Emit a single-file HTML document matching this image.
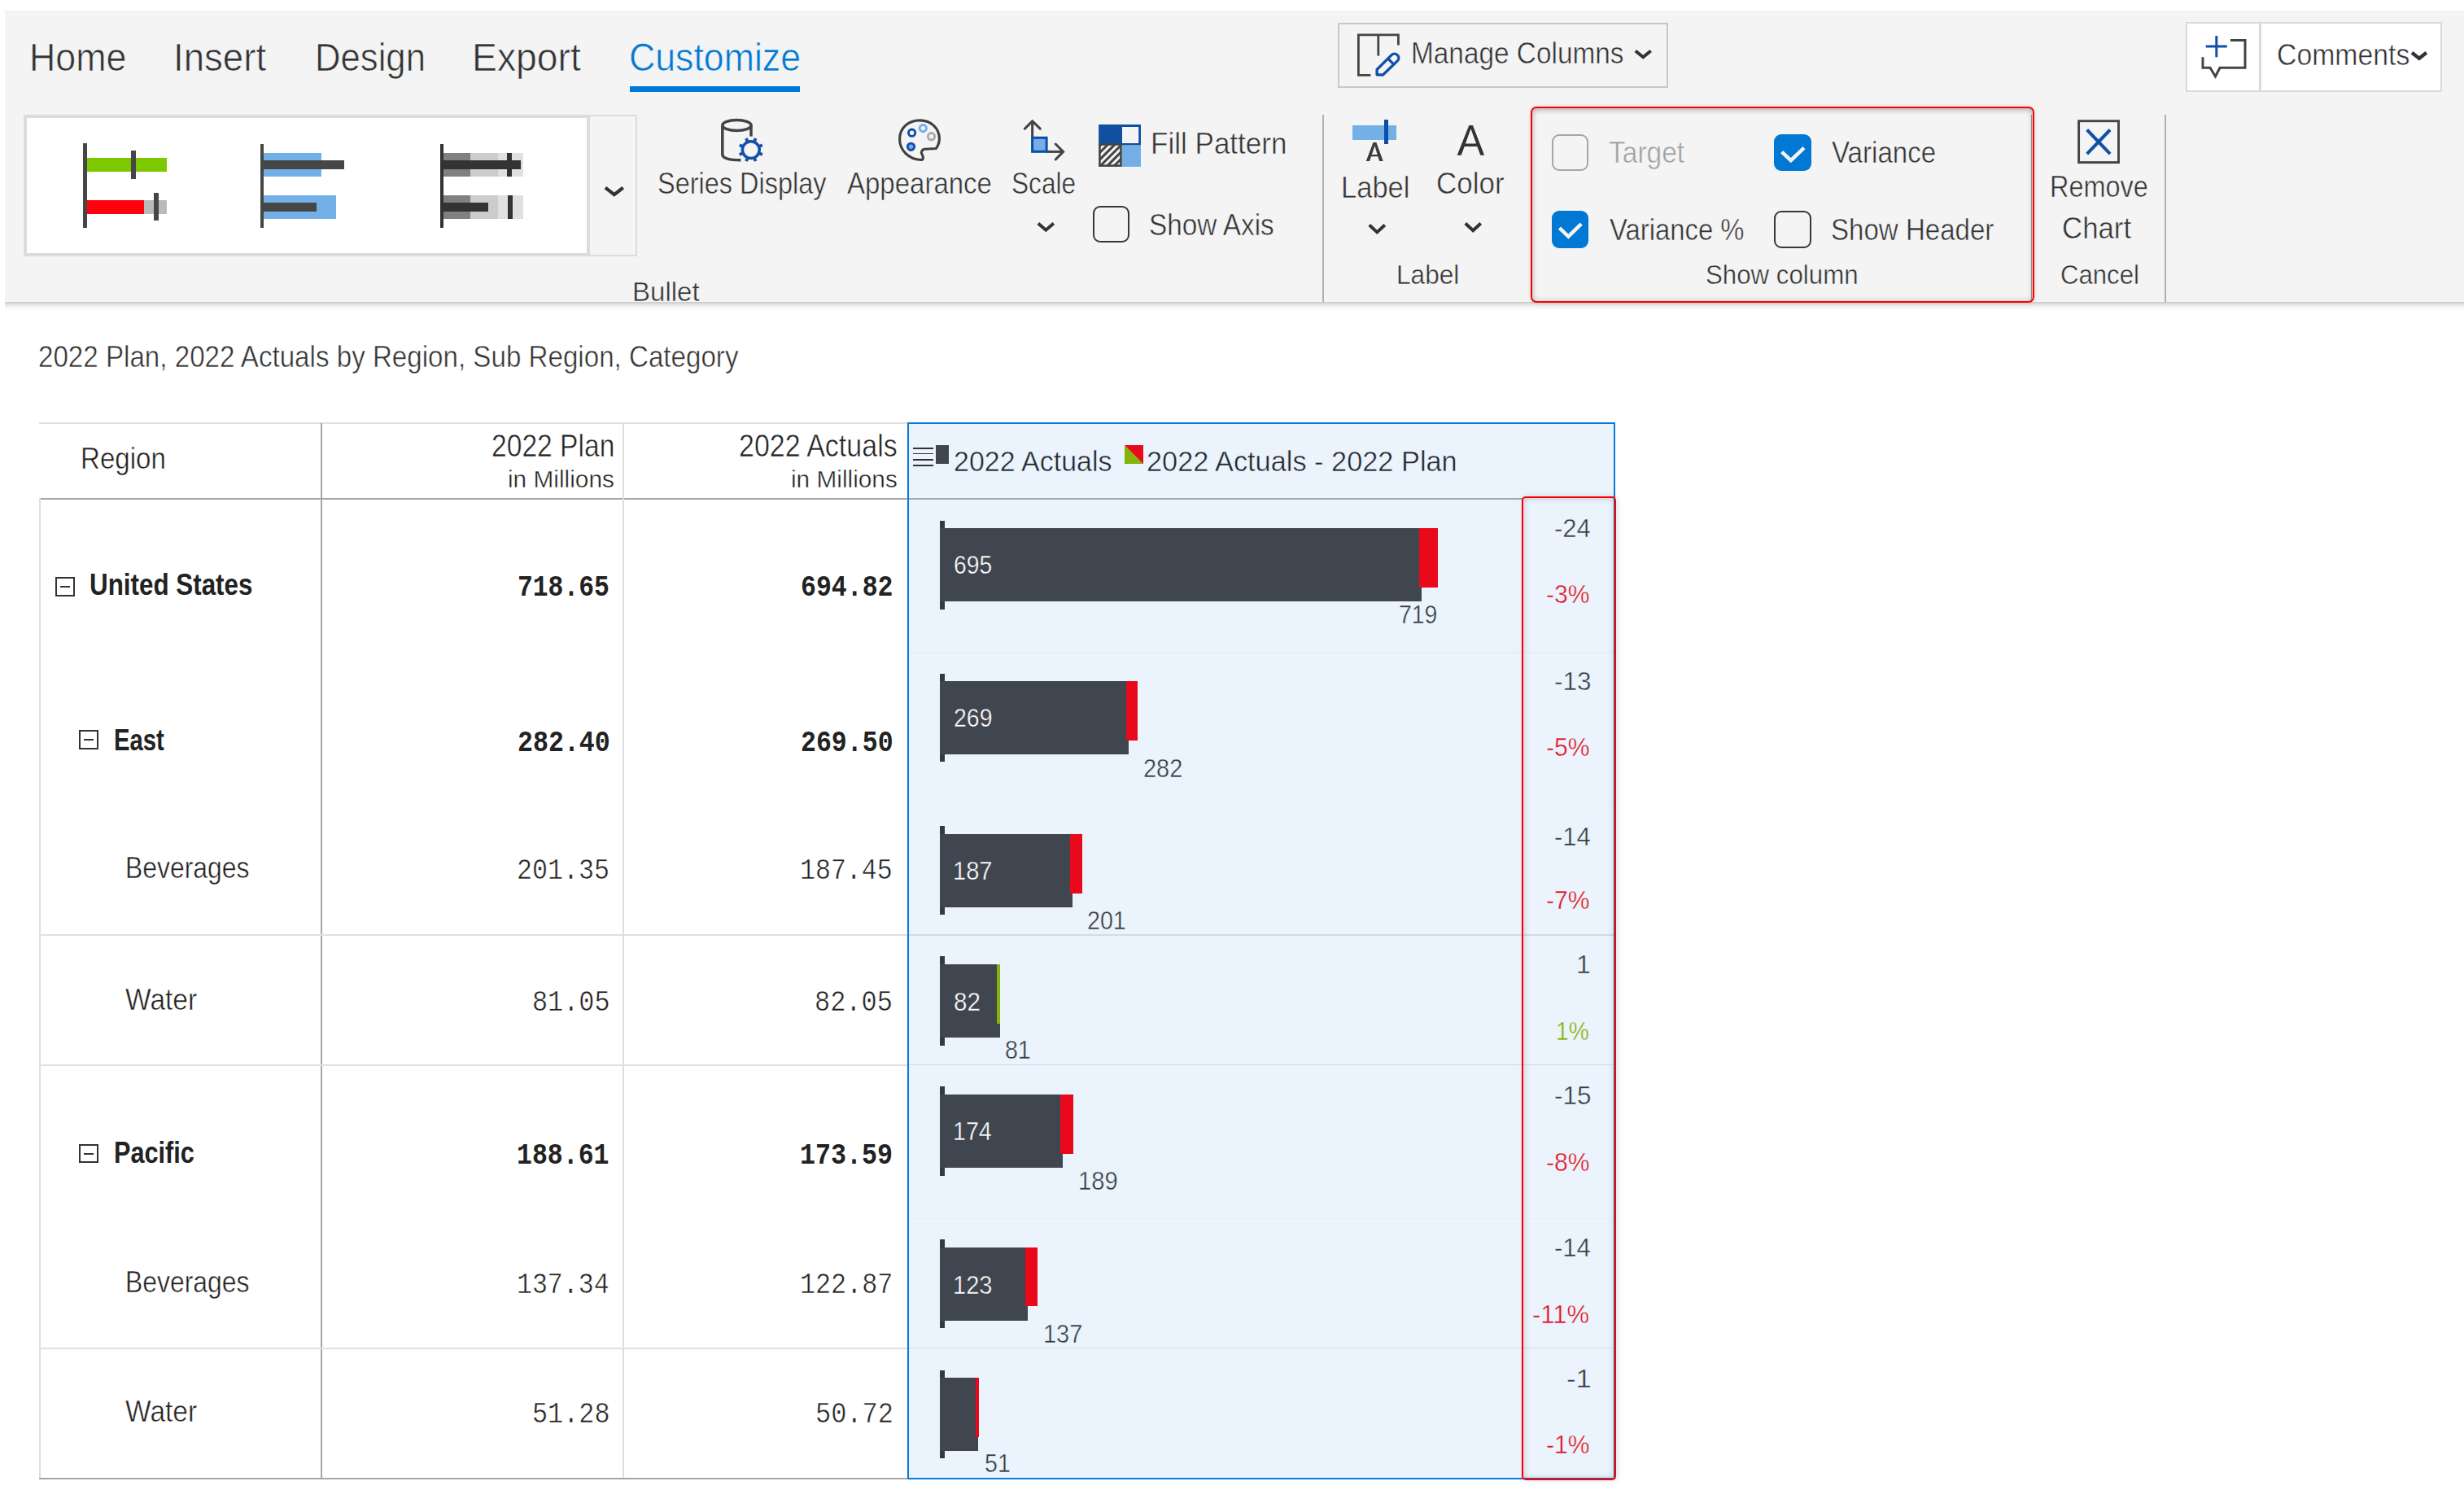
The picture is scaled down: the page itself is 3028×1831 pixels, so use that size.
<!DOCTYPE html>
<html><head><meta charset="utf-8"><title>Customize</title>
<style>
html,body{margin:0;padding:0;background:#fff;}
body{width:3028px;height:1831px;overflow:hidden;position:relative;font-family:"Liberation Sans",sans-serif;}
body>div,body>svg{position:absolute;}
.tx{white-space:nowrap;line-height:2em;transform-origin:0 0;}
</style></head><body>
<div style="left:6.00px;top:13.00px;width:3022.00px;height:357.80px;background:#f4f4f4;"></div>
<div style="left:6.00px;top:370.80px;width:3022.00px;height:11.20px;background:linear-gradient(to bottom, rgba(0,0,0,0.22) 0%, rgba(0,0,0,0.17) 12%, rgba(0,0,0,0.09) 35%, rgba(0,0,0,0.03) 65%, rgba(0,0,0,0) 100%);"></div>
<div style="left:774.00px;top:106.00px;width:209.00px;height:7.00px;background:#0078d4;"></div>
<div style="left:1644.30px;top:27.50px;width:405.30px;height:80.40px;box-sizing:border-box;border:2px solid #c8c8c8"></div>
<div style="left:2686.00px;top:27.30px;width:315.00px;height:85.30px;box-sizing:border-box;border:2px solid #dadada;background:#fff"></div>
<div style="left:2776.00px;top:28.00px;width:2.70px;height:84.00px;background:#dadada;"></div>
<div style="left:29.00px;top:141.00px;width:696.00px;height:173.50px;box-sizing:border-box;border:4.5px solid #dcdcdc;background:#fff"></div>
<div style="left:721.00px;top:141.00px;width:62.00px;height:173.50px;box-sizing:border-box;border:2px solid #dcdcdc;border-left:4px solid #dcdcdc"></div>
<div style="left:1625.00px;top:141.00px;width:2.00px;height:230.00px;background:#b0b0b0;"></div>
<div style="left:2660.00px;top:141.00px;width:2.00px;height:230.00px;background:#b0b0b0;"></div>
<div style="left:2495.50px;top:141.00px;width:1.50px;height:230.00px;background:#a0a0a0;"></div>
<div style="left:102.00px;top:176.40px;width:4.60px;height:103.60px;background:#464646;"></div>
<div style="left:106.60px;top:194.00px;width:98.40px;height:17.20px;background:#7ec800;"></div>
<div style="left:161.00px;top:185.40px;width:5.50px;height:34.20px;background:#464646;"></div>
<div style="left:106.60px;top:246.00px;width:70.70px;height:17.00px;background:#ff000c;"></div>
<div style="left:177.30px;top:246.00px;width:27.70px;height:17.00px;background:#bcbab6;"></div>
<div style="left:189.30px;top:237.00px;width:5.80px;height:34.30px;background:#464646;"></div>
<div style="left:320.10px;top:176.70px;width:4.20px;height:103.10px;background:#464646;"></div>
<div style="left:324.30px;top:188.00px;width:70.60px;height:28.80px;background:#74b0e8;"></div>
<div style="left:324.30px;top:197.10px;width:98.40px;height:10.80px;background:#464646;"></div>
<div style="left:324.30px;top:239.80px;width:89.20px;height:29.00px;background:#74b0e8;"></div>
<div style="left:324.30px;top:248.60px;width:64.30px;height:11.30px;background:#464646;"></div>
<div style="left:540.50px;top:176.80px;width:4.50px;height:103.10px;background:#333333;"></div>
<div style="left:545.00px;top:187.80px;width:33.00px;height:29.00px;background:#808080;"></div>
<div style="left:578.00px;top:187.80px;width:34.00px;height:29.00px;background:#cccccc;"></div>
<div style="left:612.00px;top:187.80px;width:31.00px;height:29.00px;background:#e0e0e0;"></div>
<div style="left:545.00px;top:240.00px;width:33.00px;height:28.75px;background:#808080;"></div>
<div style="left:578.00px;top:240.00px;width:34.00px;height:28.75px;background:#cccccc;"></div>
<div style="left:612.00px;top:240.00px;width:31.00px;height:28.75px;background:#e0e0e0;"></div>
<div style="left:545.00px;top:197.00px;width:95.00px;height:11.00px;background:#333333;"></div>
<div style="left:623.00px;top:187.80px;width:6.00px;height:29.00px;background:#333333;"></div>
<div style="left:545.00px;top:248.60px;width:55.30px;height:11.20px;background:#333333;"></div>
<div style="left:623.75px;top:240.00px;width:5.95px;height:28.75px;background:#333333;"></div>
<svg style="left:739.60px;top:225.50px" width="29.7" height="18.5" viewBox="0 0 29.7 18.5"><polyline points="3.94,4.67 14.85,13.15 25.77,4.67" fill="none" stroke="#333" stroke-width="4.3" stroke-linejoin="miter" stroke-linecap="butt"/></svg>
<svg style="left:1272.40px;top:270.00px" width="26.6" height="17.8" viewBox="0 0 26.6 17.8"><polyline points="3.80,4.48 13.30,12.68 22.80,4.48" fill="none" stroke="#333" stroke-width="4.0" stroke-linejoin="miter" stroke-linecap="butt"/></svg>
<svg style="left:1678.90px;top:272.20px" width="26.6" height="18.5" viewBox="0 0 26.6 18.5"><polyline points="3.80,4.48 13.30,13.38 22.80,4.48" fill="none" stroke="#333" stroke-width="4.0" stroke-linejoin="miter" stroke-linecap="butt"/></svg>
<svg style="left:1796.50px;top:270.00px" width="26.5" height="18.3" viewBox="0 0 26.5 18.3"><polyline points="3.80,4.48 13.25,13.18 22.70,4.48" fill="none" stroke="#333" stroke-width="4.0" stroke-linejoin="miter" stroke-linecap="butt"/></svg>
<svg style="left:2006.00px;top:57.60px" width="26.5" height="17.4" viewBox="0 0 26.5 17.4"><polyline points="3.80,4.48 13.25,12.28 22.70,4.48" fill="none" stroke="#333" stroke-width="4.0" stroke-linejoin="miter" stroke-linecap="butt"/></svg>
<svg style="left:2960.00px;top:60.20px" width="25.8" height="17.1" viewBox="0 0 25.8 17.1"><polyline points="3.98,4.73 12.90,11.67 21.82,4.73" fill="none" stroke="#333" stroke-width="4.4" stroke-linejoin="miter" stroke-linecap="butt"/></svg>
<svg style="left:870.00px;top:135.00px" width="80" height="70" viewBox="0 0 80 70">
<path d="M17.8,19 V55 C17.8,59.5 27,62 40.4,61.8" fill="none" stroke="#444" stroke-width="3.5"/>
<ellipse cx="35.4" cy="19" rx="17.6" ry="6.4" fill="none" stroke="#444" stroke-width="3.5"/>
<path d="M53,19 V32.6" fill="none" stroke="#444" stroke-width="3.5"/>
<g transform="translate(52.8,49.1)" fill="none" stroke="#1450a8">
<circle r="10.45" stroke-width="3.5"/>
<g stroke-width="3.8"><line x1="4.40" y1="-10.62" x2="5.82" y2="-14.04"/><line x1="10.62" y1="-4.40" x2="14.04" y2="-5.82"/><line x1="10.62" y1="4.40" x2="14.04" y2="5.82"/><line x1="4.40" y1="10.62" x2="5.82" y2="14.04"/><line x1="-4.40" y1="10.62" x2="-5.82" y2="14.04"/><line x1="-10.62" y1="4.40" x2="-14.04" y2="5.82"/><line x1="-10.62" y1="-4.40" x2="-14.04" y2="-5.82"/><line x1="-4.40" y1="-10.62" x2="-5.82" y2="-14.04"/></g></g>
</svg>
<svg style="left:1100.00px;top:142.00px" width="60" height="60" viewBox="0 0 60 60">
<path d="M31.9,54.5 C16,54 5.6,42 5.6,29 C5.6,15 16.5,5.9 30.5,5.9 C44,5.9 54.4,15.5 54.4,28.5 C54.4,33 52.5,37.5 50.3,40.5 L36.5,41.3 C33,41.5 31.5,45 33,47.5 C35,51 35,54.5 31.9,54.5 Z" fill="none" stroke="#404040" stroke-width="3.1" stroke-linejoin="round"/>
<circle cx="20.6" cy="21.2" r="4.15" fill="none" stroke="#0f4ea8" stroke-width="2.9"/>
<circle cx="34.3" cy="15.6" r="4.15" fill="none" stroke="#74b0ee" stroke-width="2.9"/>
<circle cx="44.5" cy="25.7" r="4.15" fill="none" stroke="#aaaaaa" stroke-width="2.9"/>
<circle cx="19.5" cy="38.3" r="4.15" fill="#74b0e8" stroke="#0f4ea8" stroke-width="2.9"/>
</svg>
<svg style="left:1230.00px;top:140.00px" width="84" height="64" viewBox="0 0 84 64">
<path d="M38.65,29 V9.5" fill="none" stroke="#444" stroke-width="3.05"/>
<polyline points="29.4,18.2 38.65,8.9 48.2,18.2" fill="none" stroke="#444" stroke-width="3.05" stroke-linecap="round"/>
<path d="M56,46.4 H76" fill="none" stroke="#444" stroke-width="3.05"/>
<polyline points="67.2,37 76.6,46.4 67.2,56" fill="none" stroke="#444" stroke-width="3.05" stroke-linecap="round"/>
<rect x="38.6" y="29.3" width="17.5" height="17" fill="#74b0e8" stroke="#0f4ea8" stroke-width="3.05"/>
</svg>
<svg style="left:1349.00px;top:152.00px" width="55" height="55" viewBox="0 0 55 55">
<defs><pattern id="hatch" width="6" height="6" patternUnits="userSpaceOnUse" patternTransform="translate(2,0) rotate(45)"><rect width="6" height="6" fill="#f4f4f4"/><rect width="3" height="6" fill="#444"/></pattern></defs>
<rect x="1.1" y="1" width="51.9" height="25.6" fill="#1050a0"/>
<rect x="30" y="4" width="20.2" height="20" fill="#f4f4f4"/>
<rect x="29.75" y="26.6" width="23.25" height="26.3" fill="#74aee6"/>
<rect x="2.4" y="25.5" width="26.05" height="26.1" fill="url(#hatch)" stroke="#444" stroke-width="2.6"/>
</svg>
<div style="left:1343.00px;top:252.60px;width:45.30px;height:45.40px;box-sizing:border-box;border:2.6px solid #383838;border-radius:9px"></div>
<div style="left:1906.60px;top:164.50px;width:45.40px;height:45.40px;box-sizing:border-box;border:2.6px solid #a6a6a6;border-radius:9px"></div>
<div style="left:2180.00px;top:164.50px;width:46.40px;height:45.50px;box-sizing:border-box;background:#0078d4;border-radius:9px"></div>
<svg style="left:2180.00px;top:164.50px" width="46.40000000000009" height="45.5" viewBox="0 0 46.40000000000009 45.5"><polyline points="9.6,21.6 20.8,32.2 37.0,16.6" fill="none" stroke="#f4f4f4" stroke-width="4.5"/></svg>
<div style="left:1906.60px;top:259.30px;width:45.40px;height:45.70px;box-sizing:border-box;background:#0078d4;border-radius:9px"></div>
<svg style="left:1906.60px;top:259.30px" width="45.40000000000009" height="45.69999999999999" viewBox="0 0 45.40000000000009 45.69999999999999"><polyline points="9.4,21.1 20.4,31.6 36.2,16.2" fill="none" stroke="#f4f4f4" stroke-width="4.5"/></svg>
<div style="left:2180.00px;top:259.30px;width:46.40px;height:45.70px;box-sizing:border-box;border:2.6px solid #383838;border-radius:9px"></div>
<div style="left:1662.20px;top:153.80px;width:54.00px;height:17.80px;background:#74b0e8;"></div>
<div style="left:1701.00px;top:147.40px;width:4.90px;height:30.10px;background:#0f4ea8;"></div>
<svg style="left:1676.00px;top:172.00px" width="28" height="30" viewBox="0 0 28 30"><path d="M2.8,26 L11.5,3.1 L15.4,3.1 L23.7,26 L19.2,26 L17.3,20.3 L9.0,20.3 L7.1,26 Z M9.8,18.1 L16.6,18.1 L13.5,7.2 Z" fill="#3c3c3c" fill-rule="evenodd"/></svg>
<svg style="left:1788.00px;top:151.00px" width="40" height="42" viewBox="0 0 40 42"><path d="M2.7,39.8 L17.3,2.9 L21.9,2.9 L36.1,39.8 L31.3,39.8 L27.3,28.9 L11.7,28.9 L7.7,39.8 Z M12.9,25.4 L26.1,25.4 L19.5,7.3 Z" fill="#333" fill-rule="evenodd"/></svg>
<svg style="left:1664.00px;top:38.00px" width="60" height="60" viewBox="0 0 60 60">
<path d="M20.4,54.35 H5.4 V4.9 H54.4 V17.5" fill="none" stroke="#444" stroke-width="2.8"/>
<path d="M29.8,4.9 V30.6" fill="none" stroke="#444" stroke-width="2.8"/>
<path d="M28.1,53.8 L28.1,47.5 L46,29.6 A5.16,5.16 0 0 1 53.3,36.9 L35.5,54.0 Z" fill="none" stroke="#1050a8" stroke-width="3.3" stroke-linejoin="round"/>
<path d="M41.65,33.95 L48.8,41.1" stroke="#1050a8" stroke-width="3.3"/>
</svg>
<svg style="left:2700.00px;top:38.00px" width="66" height="64" viewBox="0 0 66 64">
<path d="M41,11.5 H59 V45.3 H28 L22.5,56 L16,45.3 H7 V32.2" fill="none" stroke="#444" stroke-width="3"/>
<path d="M23.8,6 V32.2 M10.7,19 H36.8" stroke="#0f4ea8" stroke-width="3"/>
</svg>
<svg style="left:2550.00px;top:144.00px" width="60" height="60" viewBox="0 0 60 60"><rect x="4.6" y="4.7" width="48.9" height="50.9" fill="none" stroke="#444" stroke-width="2.9"/><path d="M14.7,15.5 L43.1,45.1 M43.1,15.5 L14.7,45.1" stroke="#1050a8" stroke-width="4"/></svg>
<div style="left:1880.80px;top:130.70px;width:619.00px;height:241.50px;box-sizing:border-box;border:2.6px solid #ff0000;border-radius:7px;box-shadow:inset 0 3px 7px -1px rgba(0,0,0,0.2), inset 0 0 8px rgba(0,0,0,0.14), 0 0 5px rgba(0,0,0,0.12)"></div>
<div style="left:48.00px;top:519.20px;width:1068.00px;height:2.00px;background:#e0e0e0;"></div>
<div style="left:48.00px;top:611.50px;width:1068.00px;height:2.00px;background:#a6a6a6;"></div>
<div style="left:394.00px;top:520.00px;width:2.00px;height:1298.00px;background:#a6a6a6;"></div>
<div style="left:765.00px;top:520.00px;width:2.00px;height:1298.00px;background:#dedede;"></div>
<div style="left:47.80px;top:612.00px;width:1.80px;height:1206.00px;background:#e0e0e0;"></div>
<div style="left:48.00px;top:1148.30px;width:1068.00px;height:1.80px;background:#e0e0e0;"></div>
<div style="left:48.00px;top:1307.80px;width:1068.00px;height:1.80px;background:#e0e0e0;"></div>
<div style="left:48.00px;top:1656.00px;width:1068.00px;height:1.80px;background:#e0e0e0;"></div>
<div style="left:48.00px;top:1816.00px;width:1068.00px;height:2.00px;background:#a6a6a6;"></div>
<div style="left:68.20px;top:709.30px;width:23.50px;height:23.30px;box-sizing:border-box;border:2.2px solid #333"></div>
<div style="left:73.90px;top:719.85px;width:12.10px;height:2.20px;background:#333;"></div>
<div style="left:97.10px;top:897.40px;width:23.50px;height:23.20px;box-sizing:border-box;border:2.2px solid #333"></div>
<div style="left:102.80px;top:907.90px;width:12.10px;height:2.20px;background:#333;"></div>
<div style="left:97.10px;top:1405.90px;width:23.50px;height:23.40px;box-sizing:border-box;border:2.2px solid #333"></div>
<div style="left:102.80px;top:1416.50px;width:12.10px;height:2.20px;background:#333;"></div>
<div style="left:1116.00px;top:520.00px;width:868.00px;height:1297.00px;background:#ebf3fc;"></div>
<div style="left:1116.00px;top:611.50px;width:755.00px;height:2.00px;background:#a3a9b0;"></div>
<div style="left:1116.00px;top:801.20px;width:868.00px;height:1.60px;background:#e6eef8;"></div>
<div style="left:1116.00px;top:989.60px;width:868.00px;height:1.60px;background:#e6eef8;"></div>
<div style="left:1116.00px;top:1148.20px;width:868.00px;height:1.60px;background:#d3dbe3;"></div>
<div style="left:1116.00px;top:1307.80px;width:868.00px;height:1.60px;background:#d3dbe3;"></div>
<div style="left:1116.00px;top:1496.60px;width:868.00px;height:1.60px;background:#e6eef8;"></div>
<div style="left:1116.00px;top:1655.60px;width:868.00px;height:1.60px;background:#d3dbe3;"></div>
<div style="left:1114.80px;top:518.80px;width:870.50px;height:1299.40px;box-sizing:border-box;border:2.4px solid #0a78d4"></div>
<div style="left:1121.60px;top:549.90px;width:25.40px;height:1.80px;background:#333;"></div>
<div style="left:1121.60px;top:556.70px;width:25.40px;height:1.80px;background:#333;"></div>
<div style="left:1121.60px;top:564.10px;width:25.40px;height:1.80px;background:#333;"></div>
<div style="left:1121.60px;top:571.30px;width:25.40px;height:1.80px;background:#333;"></div>
<div style="left:1150.00px;top:547.00px;width:16.20px;height:22.80px;background:#40464f;"></div>
<svg style="left:1382.00px;top:546.80px" width="23.2" height="23.5" viewBox="0 0 23.2 23.5"><path d="M0,0 L23.2,23.5 L0,23.5 Z" fill="#84b30c"/><path d="M0,0 L23.2,0 L23.2,23.5 Z" fill="#e8091b"/></svg>
<div style="left:1155.00px;top:639.50px;width:6.00px;height:109.20px;background:#343a42;"></div>
<div style="left:1155.00px;top:649.00px;width:592.00px;height:90.00px;background:#40464f;"></div>
<div style="left:1744.00px;top:649.00px;width:23.00px;height:73.00px;background:#e8091b;"></div>
<div style="left:1155.00px;top:827.50px;width:6.00px;height:108.70px;background:#343a42;"></div>
<div style="left:1155.00px;top:837.00px;width:232.40px;height:90.00px;background:#40464f;"></div>
<div style="left:1384.20px;top:836.60px;width:14.20px;height:73.10px;background:#e8091b;"></div>
<div style="left:1155.00px;top:1015.40px;width:6.00px;height:108.80px;background:#343a42;"></div>
<div style="left:1155.00px;top:1025.00px;width:163.00px;height:90.00px;background:#40464f;"></div>
<div style="left:1314.80px;top:1024.70px;width:14.90px;height:73.00px;background:#e8091b;"></div>
<div style="left:1155.00px;top:1175.20px;width:6.00px;height:109.50px;background:#343a42;"></div>
<div style="left:1155.00px;top:1184.70px;width:73.90px;height:90.20px;background:#40464f;"></div>
<div style="left:1224.90px;top:1184.70px;width:4.00px;height:73.00px;background:#84b30c;"></div>
<div style="left:1155.00px;top:1335.40px;width:6.00px;height:109.60px;background:#343a42;"></div>
<div style="left:1155.00px;top:1344.90px;width:151.40px;height:90.20px;background:#40464f;"></div>
<div style="left:1303.00px;top:1344.90px;width:16.10px;height:72.70px;background:#e8091b;"></div>
<div style="left:1155.00px;top:1523.20px;width:6.00px;height:109.20px;background:#343a42;"></div>
<div style="left:1155.00px;top:1533.00px;width:108.30px;height:89.90px;background:#40464f;"></div>
<div style="left:1260.00px;top:1533.00px;width:15.30px;height:72.30px;background:#e8091b;"></div>
<div style="left:1155.00px;top:1683.50px;width:6.00px;height:108.80px;background:#343a42;"></div>
<div style="left:1155.00px;top:1693.40px;width:47.30px;height:89.40px;background:#40464f;"></div>
<div style="left:1199.00px;top:1693.40px;width:4.00px;height:72.30px;background:#e8091b;"></div>
<div style="left:1870.40px;top:610.40px;width:116.00px;height:1208.40px;box-sizing:border-box;border:2.5px solid #ff0000;border-radius:5px;box-shadow:inset 0 0 9px rgba(0,0,0,0.2), 2px 0 6px rgba(0,0,0,0.12)"></div>
<div class="tx" style="left:35.72px;top:21.86px;font-size:48.55px;font-family:Liberation Sans;color:#333333;font-weight:400;transform:scaleX(0.9220);-webkit-text-stroke:0.68px #f4f4f4">Home</div>
<div class="tx" style="left:213.19px;top:22.46px;font-size:48.55px;font-family:Liberation Sans;color:#333333;font-weight:400;transform:scaleX(0.9397);-webkit-text-stroke:0.68px #f4f4f4">Insert</div>
<div class="tx" style="left:386.91px;top:22.46px;font-size:48.55px;font-family:Liberation Sans;color:#333333;font-weight:400;transform:scaleX(0.8995);-webkit-text-stroke:0.68px #f4f4f4">Design</div>
<div class="tx" style="left:580.19px;top:22.46px;font-size:48.55px;font-family:Liberation Sans;color:#333333;font-weight:400;transform:scaleX(0.9541);-webkit-text-stroke:0.68px #f4f4f4">Export</div>
<div class="tx" style="left:772.87px;top:21.96px;font-size:48.55px;font-family:Liberation Sans;color:#0078d4;font-weight:400;transform:scaleX(0.9200);-webkit-text-stroke:0.68px #f4f4f4">Customize</div>
<div class="tx" style="left:1733.93px;top:29.68px;font-size:36.09px;font-family:Liberation Sans;color:#333333;font-weight:400;transform:scaleX(0.9250);-webkit-text-stroke:0.51px #f4f4f4">Manage Columns</div>
<div class="tx" style="left:2798.31px;top:32.38px;font-size:36.09px;font-family:Liberation Sans;color:#333333;font-weight:400;transform:scaleX(0.9369);-webkit-text-stroke:0.51px #ffffff">Comments</div>
<div class="tx" style="left:807.88px;top:189.58px;font-size:36.09px;font-family:Liberation Sans;color:#333333;font-weight:400;transform:scaleX(0.8999);-webkit-text-stroke:0.51px #f4f4f4">Series Display</div>
<div class="tx" style="left:1041.40px;top:189.68px;font-size:36.09px;font-family:Liberation Sans;color:#333333;font-weight:400;transform:scaleX(0.9147);-webkit-text-stroke:0.51px #f4f4f4">Appearance</div>
<div class="tx" style="left:1243.12px;top:189.68px;font-size:36.09px;font-family:Liberation Sans;color:#333333;font-weight:400;transform:scaleX(0.8773);-webkit-text-stroke:0.51px #f4f4f4">Scale</div>
<div class="tx" style="left:1414.40px;top:141.28px;font-size:36.09px;font-family:Liberation Sans;color:#333333;font-weight:400;transform:scaleX(0.9714);-webkit-text-stroke:0.51px #f4f4f4">Fill Pattern</div>
<div class="tx" style="left:1412.33px;top:241.28px;font-size:36.09px;font-family:Liberation Sans;color:#333333;font-weight:400;transform:scaleX(0.9237);-webkit-text-stroke:0.51px #f4f4f4">Show Axis</div>
<div class="tx" style="left:776.66px;top:324.52px;font-size:33.91px;font-family:Liberation Sans;color:#333333;font-weight:400;transform:scaleX(0.9739);-webkit-text-stroke:0.47px #f4f4f4">Bullet</div>
<div class="tx" style="left:1647.84px;top:194.88px;font-size:36.09px;font-family:Liberation Sans;color:#333333;font-weight:400;transform:scaleX(0.9566);-webkit-text-stroke:0.51px #f4f4f4">Label</div>
<div class="tx" style="left:1765.15px;top:189.98px;font-size:36.09px;font-family:Liberation Sans;color:#333333;font-weight:400;transform:scaleX(0.9687);-webkit-text-stroke:0.51px #f4f4f4">Color</div>
<div class="tx" style="left:1715.77px;top:304.12px;font-size:33.91px;font-family:Liberation Sans;color:#333333;font-weight:400;transform:scaleX(0.9321);-webkit-text-stroke:0.47px #f4f4f4">Label</div>
<div class="tx" style="left:1976.63px;top:152.48px;font-size:36.09px;font-family:Liberation Sans;color:#a0a0a0;font-weight:400;transform:scaleX(0.9291);-webkit-text-stroke:0.51px #f4f4f4">Target</div>
<div class="tx" style="left:1977.87px;top:247.28px;font-size:36.09px;font-family:Liberation Sans;color:#333333;font-weight:400;transform:scaleX(0.9107);-webkit-text-stroke:0.51px #f4f4f4">Variance %</div>
<div class="tx" style="left:2250.87px;top:152.28px;font-size:36.09px;font-family:Liberation Sans;color:#333333;font-weight:400;transform:scaleX(0.9176);-webkit-text-stroke:0.51px #f4f4f4">Variance</div>
<div class="tx" style="left:2249.55px;top:247.28px;font-size:36.09px;font-family:Liberation Sans;color:#333333;font-weight:400;transform:scaleX(0.9164);-webkit-text-stroke:0.51px #f4f4f4">Show Header</div>
<div class="tx" style="left:2096.14px;top:304.22px;font-size:33.91px;font-family:Liberation Sans;color:#333333;font-weight:400;transform:scaleX(0.9217);-webkit-text-stroke:0.47px #f4f4f4">Show column</div>
<div class="tx" style="left:2518.90px;top:194.48px;font-size:36.09px;font-family:Liberation Sans;color:#333333;font-weight:400;transform:scaleX(0.8998);-webkit-text-stroke:0.51px #f4f4f4">Remove</div>
<div class="tx" style="left:2533.86px;top:244.78px;font-size:36.09px;font-family:Liberation Sans;color:#333333;font-weight:400;transform:scaleX(0.9647);-webkit-text-stroke:0.51px #f4f4f4">Chart</div>
<div class="tx" style="left:2531.74px;top:303.62px;font-size:33.91px;font-family:Liberation Sans;color:#333333;font-weight:400;transform:scaleX(0.9180);-webkit-text-stroke:0.47px #f4f4f4">Cancel</div>
<div class="tx" style="left:47.24px;top:402.89px;font-size:36.23px;font-family:Liberation Sans;color:#333333;font-weight:400;transform:scaleX(0.9151);-webkit-text-stroke:0.51px #ffffff">2022 Plan, 2022 Actuals by Region, Sub Region, Category</div>
<div class="tx" style="left:98.75px;top:526.13px;font-size:37.68px;font-family:Liberation Sans;color:#222222;font-weight:400;transform:scaleX(0.8779);-webkit-text-stroke:0.53px #ffffff">Region</div>
<div class="tx" style="left:604.22px;top:510.05px;font-size:38.26px;font-family:Liberation Sans;color:#222222;font-weight:400;transform:scaleX(0.8788);-webkit-text-stroke:0.54px #ffffff">2022 Plan</div>
<div class="tx" style="left:623.81px;top:560.87px;font-size:28.99px;font-family:Liberation Sans;color:#222222;font-weight:400;transform:scaleX(1.0286);-webkit-text-stroke:0.41px #ffffff">in Millions</div>
<div class="tx" style="left:907.90px;top:510.05px;font-size:38.26px;font-family:Liberation Sans;color:#222222;font-weight:400;transform:scaleX(0.8888);-webkit-text-stroke:0.54px #ffffff">2022 Actuals</div>
<div class="tx" style="left:971.81px;top:560.87px;font-size:28.99px;font-family:Liberation Sans;color:#222222;font-weight:400;transform:scaleX(1.0277);-webkit-text-stroke:0.41px #ffffff">in Millions</div>
<div class="tx" style="left:1172.20px;top:531.96px;font-size:35.22px;font-family:Liberation Sans;color:#1f2630;font-weight:400;transform:scaleX(0.9641);-webkit-text-stroke:0.49px #ebf3fc">2022 Actuals</div>
<div class="tx" style="left:1409.18px;top:531.96px;font-size:35.22px;font-family:Liberation Sans;color:#1f2630;font-weight:400;transform:scaleX(0.9747);-webkit-text-stroke:0.49px #ebf3fc">2022 Actuals - 2022 Plan</div>
<div class="tx" style="left:110.02px;top:682.30px;font-size:36.81px;font-family:Liberation Sans;color:#222222;font-weight:700;transform:scaleX(0.8525)">United States</div>
<div class="tx" style="left:636.02px;top:685.37px;font-size:37.16px;font-family:Liberation Mono;color:#222222;font-weight:700;transform:scaleX(0.8435)">718.65</div>
<div class="tx" style="left:984.01px;top:685.37px;font-size:37.16px;font-family:Liberation Mono;color:#222222;font-weight:700;transform:scaleX(0.8482)">694.82</div>
<div class="tx" style="left:139.65px;top:872.80px;font-size:36.81px;font-family:Liberation Sans;color:#222222;font-weight:700;transform:scaleX(0.7949)">East</div>
<div class="tx" style="left:635.60px;top:875.97px;font-size:37.16px;font-family:Liberation Mono;color:#222222;font-weight:700;transform:scaleX(0.8505)">282.40</div>
<div class="tx" style="left:983.81px;top:875.97px;font-size:37.16px;font-family:Liberation Mono;color:#222222;font-weight:700;transform:scaleX(0.8490)">269.50</div>
<div class="tx" style="left:153.65px;top:1030.30px;font-size:36.81px;font-family:Liberation Sans;color:#222222;font-weight:400;transform:scaleX(0.8668);-webkit-text-stroke:0.52px #ffffff">Beverages</div>
<div class="tx" style="left:635.29px;top:1033.17px;font-size:37.16px;font-family:Liberation Mono;color:#222222;font-weight:400;transform:scaleX(0.8514);-webkit-text-stroke:0.52px #ffffff">201.35</div>
<div class="tx" style="left:983.49px;top:1033.17px;font-size:37.16px;font-family:Liberation Mono;color:#222222;font-weight:400;transform:scaleX(0.8499);-webkit-text-stroke:0.52px #ffffff">187.45</div>
<div class="tx" style="left:154.36px;top:1191.70px;font-size:36.81px;font-family:Liberation Sans;color:#222222;font-weight:400;transform:scaleX(0.9111);-webkit-text-stroke:0.52px #ffffff">Water</div>
<div class="tx" style="left:653.67px;top:1194.57px;font-size:37.16px;font-family:Liberation Mono;color:#222222;font-weight:400;transform:scaleX(0.8569);-webkit-text-stroke:0.52px #ffffff">81.05</div>
<div class="tx" style="left:1001.36px;top:1194.57px;font-size:37.16px;font-family:Liberation Mono;color:#222222;font-weight:400;transform:scaleX(0.8597);-webkit-text-stroke:0.52px #ffffff">82.05</div>
<div class="tx" style="left:139.56px;top:1379.80px;font-size:36.81px;font-family:Liberation Sans;color:#222222;font-weight:700;transform:scaleX(0.8324)">Pacific</div>
<div class="tx" style="left:635.29px;top:1382.67px;font-size:37.16px;font-family:Liberation Mono;color:#222222;font-weight:700;transform:scaleX(0.8481)">188.61</div>
<div class="tx" style="left:983.49px;top:1382.67px;font-size:37.16px;font-family:Liberation Mono;color:#222222;font-weight:700;transform:scaleX(0.8514)">173.59</div>
<div class="tx" style="left:153.65px;top:1539.30px;font-size:36.81px;font-family:Liberation Sans;color:#222222;font-weight:400;transform:scaleX(0.8668);-webkit-text-stroke:0.52px #ffffff">Beverages</div>
<div class="tx" style="left:635.29px;top:1542.17px;font-size:37.16px;font-family:Liberation Mono;color:#222222;font-weight:400;transform:scaleX(0.8490);-webkit-text-stroke:0.52px #ffffff">137.34</div>
<div class="tx" style="left:983.48px;top:1542.17px;font-size:37.16px;font-family:Liberation Mono;color:#222222;font-weight:400;transform:scaleX(0.8548);-webkit-text-stroke:0.52px #ffffff">122.87</div>
<div class="tx" style="left:154.36px;top:1698.00px;font-size:36.81px;font-family:Liberation Sans;color:#222222;font-weight:400;transform:scaleX(0.9111);-webkit-text-stroke:0.52px #ffffff">Water</div>
<div class="tx" style="left:653.99px;top:1700.87px;font-size:37.16px;font-family:Liberation Mono;color:#222222;font-weight:400;transform:scaleX(0.8569);-webkit-text-stroke:0.52px #ffffff">51.28</div>
<div class="tx" style="left:1001.68px;top:1700.87px;font-size:37.16px;font-family:Liberation Mono;color:#222222;font-weight:400;transform:scaleX(0.8597);-webkit-text-stroke:0.52px #ffffff">50.72</div>
<div class="tx" style="left:1171.89px;top:664.12px;font-size:30.43px;font-family:Liberation Sans;color:#ffffff;font-weight:400;transform:scaleX(0.9298);-webkit-text-stroke:0.43px #40464f">695</div>
<div class="tx" style="left:1171.88px;top:852.12px;font-size:30.43px;font-family:Liberation Sans;color:#ffffff;font-weight:400;transform:scaleX(0.9357);-webkit-text-stroke:0.43px #40464f">269</div>
<div class="tx" style="left:1170.98px;top:1040.22px;font-size:30.43px;font-family:Liberation Sans;color:#ffffff;font-weight:400;transform:scaleX(0.9539);-webkit-text-stroke:0.43px #40464f">187</div>
<div class="tx" style="left:1172.12px;top:1200.92px;font-size:30.43px;font-family:Liberation Sans;color:#ffffff;font-weight:400;transform:scaleX(0.9730);-webkit-text-stroke:0.43px #40464f">82</div>
<div class="tx" style="left:1171.01px;top:1359.83px;font-size:30.87px;font-family:Liberation Sans;color:#ffffff;font-weight:400;transform:scaleX(0.9282);-webkit-text-stroke:0.43px #40464f">174</div>
<div class="tx" style="left:1170.98px;top:1548.52px;font-size:30.43px;font-family:Liberation Sans;color:#ffffff;font-weight:400;transform:scaleX(0.9539);-webkit-text-stroke:0.43px #40464f">123</div>
<div class="tx" style="left:1718.98px;top:724.82px;font-size:30.43px;font-family:Liberation Sans;color:#333a42;font-weight:400;transform:scaleX(0.9336);-webkit-text-stroke:0.43px #ebf3fc">719</div>
<div class="tx" style="left:1404.55px;top:913.52px;font-size:30.43px;font-family:Liberation Sans;color:#333a42;font-weight:400;transform:scaleX(0.9503);-webkit-text-stroke:0.43px #ebf3fc">282</div>
<div class="tx" style="left:1335.97px;top:1100.52px;font-size:30.43px;font-family:Liberation Sans;color:#333a42;font-weight:400;transform:scaleX(0.9399);-webkit-text-stroke:0.43px #ebf3fc">201</div>
<div class="tx" style="left:1234.76px;top:1260.42px;font-size:30.43px;font-family:Liberation Sans;color:#333a42;font-weight:400;transform:scaleX(0.9376);-webkit-text-stroke:0.43px #ebf3fc">81</div>
<div class="tx" style="left:1324.87px;top:1421.42px;font-size:30.43px;font-family:Liberation Sans;color:#333a42;font-weight:400;transform:scaleX(0.9582);-webkit-text-stroke:0.43px #ebf3fc">189</div>
<div class="tx" style="left:1282.08px;top:1608.82px;font-size:30.43px;font-family:Liberation Sans;color:#333a42;font-weight:400;transform:scaleX(0.9518);-webkit-text-stroke:0.43px #ebf3fc">137</div>
<div class="tx" style="left:1209.55px;top:1767.83px;font-size:30.87px;font-family:Liberation Sans;color:#333a42;font-weight:400;transform:scaleX(0.9274);-webkit-text-stroke:0.43px #ebf3fc">51</div>
<div class="tx" style="left:1909.76px;top:618.72px;font-size:30.43px;font-family:Liberation Sans;color:#333a42;font-weight:400;transform:scaleX(1.0193);-webkit-text-stroke:0.43px #ebf3fc">-24</div>
<div class="tx" style="left:1899.60px;top:700.02px;font-size:30.43px;font-family:Liberation Sans;color:#e0101e;font-weight:400;transform:scaleX(0.9898);-webkit-text-stroke:0.43px #ebf3fc">-3%</div>
<div class="tx" style="left:1909.74px;top:807.22px;font-size:30.43px;font-family:Liberation Sans;color:#333a42;font-weight:400;transform:scaleX(1.0342);-webkit-text-stroke:0.43px #ebf3fc">-13</div>
<div class="tx" style="left:1899.60px;top:888.03px;font-size:30.87px;font-family:Liberation Sans;color:#e0101e;font-weight:400;transform:scaleX(0.9756);-webkit-text-stroke:0.43px #ebf3fc">-5%</div>
<div class="tx" style="left:1909.76px;top:997.63px;font-size:30.87px;font-family:Liberation Sans;color:#333a42;font-weight:400;transform:scaleX(1.0047);-webkit-text-stroke:0.43px #ebf3fc">-14</div>
<div class="tx" style="left:1899.60px;top:1076.13px;font-size:30.87px;font-family:Liberation Sans;color:#e0101e;font-weight:400;transform:scaleX(0.9756);-webkit-text-stroke:0.43px #ebf3fc">-7%</div>
<div class="tx" style="left:1937.43px;top:1154.73px;font-size:30.87px;font-family:Liberation Sans;color:#333a42;font-weight:400;transform:scaleX(1.0396);-webkit-text-stroke:0.43px #ebf3fc">1</div>
<div class="tx" style="left:1912.24px;top:1236.83px;font-size:30.87px;font-family:Liberation Sans;color:#7fb000;font-weight:400;transform:scaleX(0.9134);-webkit-text-stroke:0.43px #ebf3fc">1%</div>
<div class="tx" style="left:1909.74px;top:1315.63px;font-size:30.87px;font-family:Liberation Sans;color:#333a42;font-weight:400;transform:scaleX(1.0195);-webkit-text-stroke:0.43px #ebf3fc">-15</div>
<div class="tx" style="left:1899.60px;top:1397.72px;font-size:30.43px;font-family:Liberation Sans;color:#e0101e;font-weight:400;transform:scaleX(0.9898);-webkit-text-stroke:0.43px #ebf3fc">-8%</div>
<div class="tx" style="left:1909.76px;top:1503.03px;font-size:30.87px;font-family:Liberation Sans;color:#333a42;font-weight:400;transform:scaleX(1.0047);-webkit-text-stroke:0.43px #ebf3fc">-14</div>
<div class="tx" style="left:1883.26px;top:1584.53px;font-size:30.87px;font-family:Liberation Sans;color:#e0101e;font-weight:400;transform:scaleX(1.0030);-webkit-text-stroke:0.43px #ebf3fc">-11%</div>
<div class="tx" style="left:1924.61px;top:1663.73px;font-size:30.87px;font-family:Liberation Sans;color:#333a42;font-weight:400;transform:scaleX(1.1257);-webkit-text-stroke:0.43px #ebf3fc">-1</div>
<div class="tx" style="left:1899.60px;top:1744.83px;font-size:30.87px;font-family:Liberation Sans;color:#e0101e;font-weight:400;transform:scaleX(0.9756);-webkit-text-stroke:0.43px #ebf3fc">-1%</div>
</body></html>
